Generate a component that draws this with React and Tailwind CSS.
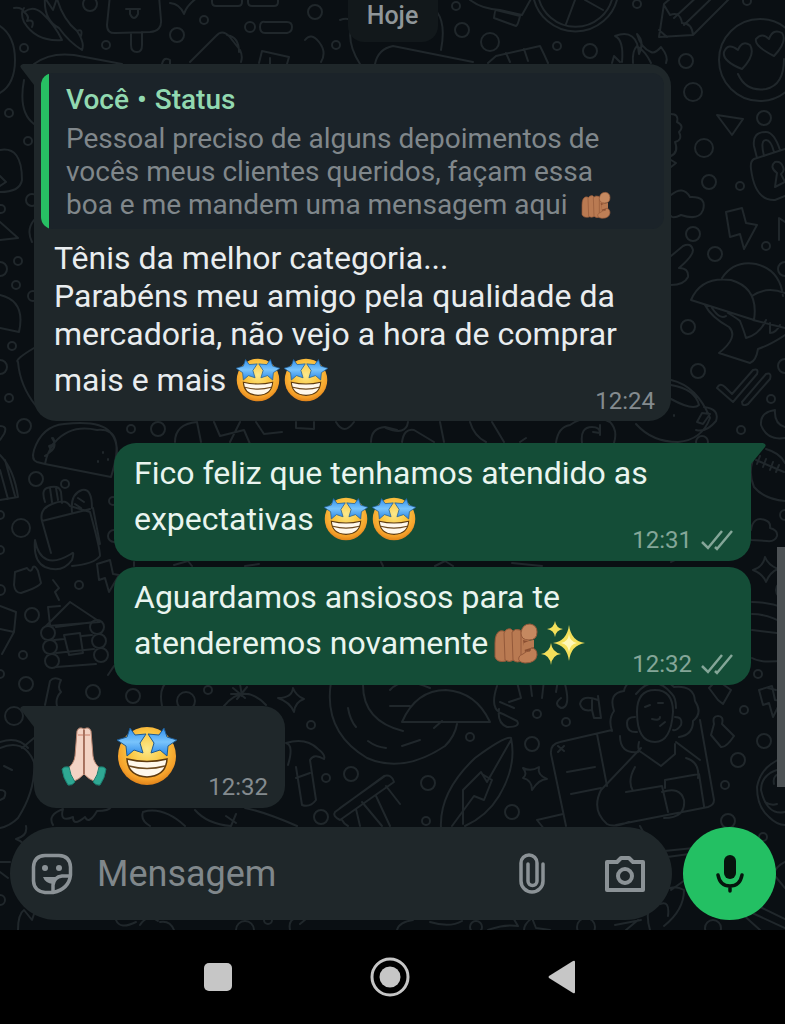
import { useState } from "react";

// [x, y, radius] of the small rings scattered on the wallpaper
const dots = [
  [24, 48, 4], [90, 4, 7], [106, 45, 4], [177, 35, 7], [204, 20, 4], [250, 27, 5], [315, 12, 7],
  [336, 45, 4], [9, 113, 4], [28, 141, 4], [32, 200, 6], [1, 209, 4], [456, 6, 4], [462, 30, 7],
  [490, 42, 9], [557, 46, 4], [590, 51, 7], [637, 4, 4], [686, 61, 7], [693, 92, 9], [764, 118, 7],
  [704, 148, 9], [709, 182, 7], [740, 186, 4], [693, 234, 7], [747, 1, 4], [715, 254, 7], [766, 246, 4],
  [785, 269, 7], [688, 327, 7], [698, 371, 7], [785, 366, 7], [771, 399, 4], [741, 430, 4], [702, 442, 6],
  [18, 261, 4], [0, 269, 7], [16, 285, 4], [33, 296, 5], [12, 346, 4], [0, 367, 7], [9, 398, 4],
  [24, 426, 7], [131, 429, 4], [158, 429, 7], [36, 479, 7], [65, 484, 4], [0, 515, 4], [21, 528, 9],
  [0, 550, 4], [79, 585, 4], [0, 590, 5], [32, 615, 7], [23, 655, 4], [0, 674, 4], [26, 684, 7],
  [93, 692, 7], [133, 696, 7], [208, 690, 4], [186, 701, 9], [14, 716, 9], [311, 725, 4], [351, 774, 7],
  [326, 778, 4], [321, 817, 7], [537, 714, 4], [566, 722, 4], [532, 744, 7], [470, 737, 4], [428, 783, 7],
  [512, 812, 7], [426, 821, 4], [744, 710, 4], [764, 741, 7], [738, 760, 7], [725, 785, 4], [728, 821, 7],
  [763, 837, 4], [758, 674, 4], [785, 515, 5], [785, 590, 9], [0, 900, 5], [268, 920, 4], [586, 927, 9],
  [245, 930, 9], [476, 927, 6], [713, 928, 8], [113, 501, 4], [114, 536, 6],
];

const doodles = [
  // peppers
  "M14 8q8-1 10 4q9-7 18 1q13 12 20 27q-26 2-38-18q-4-9 0-14M24 12q6 4 3 9q8-2 5 6M45-4q-2 24 14 32q10 14 23 22q3-7-5-19q6-3 4 5M56-5q6 24 21 36M45-2l8 12l4-12",
  // ice pop
  "M110-5l-3 30q0 9 9 8l34-1q12-1 11-12l-2-24M131 33v12q0 7 6 7q5 0 5-7V32M126 9h14M130 9v5q4 8 8 0V9",
  "M170 3q10 1 14 11q3-10 16-18M212-6v8q0 4 4 4h22q4 0 4-4v-8M248-6v8q0 4 4 4h22q4 0 4-4v-8M265 22h22q5 0 5 5t-5 6h-22q-5 0-5-6t5-5z",
  "M190 62l26-26q6-7 13 0l11 14q3 6 1 12M227 35q12 2 12 17M259 63l3-12l27 6l-2 7M270 58v6",
  "M162 64q2-8 8-4v4M305 40q6-8 14 2t2 20M340 20q10-4 12 4q-6 18 8 40M375 64q3-15 18-18l80 16M437 12q9 12 4 38",
  "M0 26q15 10 15 34T0 93M34 64q16-12 40-9l48 9M24 80q-6 32 10 44M0 150q22-4 22 30q-2 12-22 12M0 176l6 6l-6 4M0 222l18 16l-18 2M34 220q-8 10-2 22",
  // bell and clock
  "M470 0q12 9 30 10l22 5l10-18M496 10l24 6q-2 9-4 10l-22-8q1-8 2-8zM488 63l8-7l44-10q4 8 8 17M506 53l4 9M524 49l4 12",
  "M533-5a43 43 0 0 0 85 0M538-5a38 38 0 0 0 75 0M575 0l-9 24M585 0l18 10",
  // pencil
  "M659 37l5-33l14-12M659 37l34-2l36-36M664 5l6 10q10-4 12 8q10 0 11 12M674 18l26-24M684 25l30-29M659 30l8 7",
  // flame
  "M615 36q22-8 24 18q6-12-2-20q4 14 14 18q4 2 10-5q8 10 5 16M615 36q9 4 7 26M633 63q-1-12 4-17q9 6 14 17M612 63l2-7l6 6",
  // face with heart eyes
  "M801 60a41 41 0 1 1-82 0a41 41 0 1 1 82 0M742 69q-20-8-18-17q4-10 14-2q4-10 12-5q6 10-8 24M774 56q-20-10-18-17q6-7 13 0q4-11 13-6q6 8-8 23M738 74q8 18 28 15q18-4 18-30",
  "M717 115l26 4l-11 16zM671 114q8 0 6 8q8 4 2 10q4 8-4 10q4 10-4 14M671 160l5 3l-5 4",
  // padlock
  "M757 158l-3-12q-2-14 12-14q8 0 14 18M764 156q-4-16 2-16q5 0 8 12M785 149l-31 10q-4 2-3 10q4 32 24 31l10-4M775 187l2-14q-8-6-2-11q6-1 8 5q2 4-2 7l4 8z",
  "M671 216q2 3 10-1q18 6 22-5q4-14-13-13q-7-12-19-2M726 212l16-4l4 15l11 2l-13 24l-4-15l-10 3zM785 222l-6-4v22",
  // mushrooms
  "M691 300q10-24 40-20q28 8 23 40zM722 278q12-18 34-14q24 6 27 32M752 296q14-10 33-3M753 320l32 8M705 305q6 12 24 22q10 10-10 26l31 10q6-2 8-14q12-4 27-14M712 308q8 12 14 8M728 313q10 6 12 8q4 10 6 17q14-4 20-18M770 323v10q6 0 10-8M671 256l12-10q8-4 10 4q0 6-14 18q10 0 9 9q-4 8-17 8",
  // double tick
  "M717 388q3-6 8-1l7 7l21-24q6-2 4 4l-24 28l-16-14M742 402l24-28q6-2 4 5l-22 25q-6 3-6-2",
  // mug
  "M671 380q26 6 39 38q-8 22-32 24q-26 0-42-18M671 385q24 4 28 20q-6 6-28-6M704 407q16 2 12 14q-10 12-20 9M702 413l8 1l-7 10l-6-2zM674 415v1M775 410q-15 2-14 15q6 16 24 13M775 410q-1 14 10 17",
  "M556 443q2-16 14-18q20-14 40-3q8 8 4 21M582 443q-2-16 10-16q8 0 8 6l-7-1M600 425v10M470 422q4 14 16 20M492 422l12 20M440 422l4 20M386 428q20 8 22-6M402 442q2-14 12-12l20 12",
  // taco
  "M45 464l66 13q16-50-14-47q-26-6-42 12q-8 10-10 22zM45 464l-8-2q-6-2-3-12q8-24 30-26q36-4 46 8q8 8 7 24M45 456q8-4 4-10q8-2 4-8M50 452q8-6 2-14M98 461v1M103 452v1M108 459v1",
  "M0 295q26 6 19 37L0 328M34 348q-20 12-16 14q2 24 18 44M0 455q14 14 18 42L0 500M0 470l8 29M5 460l10 36M0 426q8 0 4 8L0 440",
  "M175 442q0-18 22-20M197 422l4 20M214 422l6 14l24-6l6 14M230 442l10-20M256 422l8 12l18-2M296 422v6l18 1v-7M336 422q8 14 18 0M371 442q0-14 14-15l12 3",
  // bottle, bread and banana
  "M42 521l9 32M42 521q-3-12 10-17q14-6 18 2l20 6q10 36 10 44q-6 8-28 10M42 521l48-12M45 502q-4-12 2-14q12-4 14 4l1 11M50 488l2 14M56 488l2 12M72 512q-2-18 10-22q10-2 10 18M78 498l6 4M75 504l6 4M35 540q6 32 36 14q4-4 1 6q-10 14-27 7q-12-6-10-27zM93 508l7 36",
  "M15 572l12-4q4 6 6-1q2-2 5 4l3 12q-2 4-20 10q-6 0-7-8zM97 564l13-4l3 14l6 1l-10 17l-4-14l-6 2zM53 580l6 8l-4 4l4 8",
  // log cabin
  "M70 602l30 20l-52 4M70 602l-24 24M50 625l-2-18l12-1M64 635l16-2l3 20l-14 2zM56 627l38-5M54 640l10-1M82 636l10-1M56 653l38-4M56 667l40-3",
  "M55 633a7 7 0 1 1-14 0a7 7 0 1 1 14 0M57 647a7 7 0 1 1-14 0a7 7 0 1 1 14 0M59 661a7 7 0 1 1-14 0a7 7 0 1 1 14 0M104 627a7 7 0 1 1-14 0a7 7 0 1 1 14 0M106 641a7 7 0 1 1-14 0a7 7 0 1 1 14 0M108 655a7 7 0 1 1-14 0a7 7 0 1 1 14 0",
  "M0 606l16 6l-2 20l-14-3M14 632l-12 22M108 675l6-9M45 705l5-24q4-5 11-1q-4 8 0 12q-6 6-4 14",
  "M134 562v4M174 565l14-4l4 5M245 566l14-2M381 562l2 4M435 566l10-5l8 5M512 563l30 3M671 562q10-6 34-8M520 442l6-4",
  // sleeping figure at the left edge
  "M0 748q24-10 34 14q2 28-16 56q-8 8-18 10M0 742q18-6 28 6M4 766l8 4M0 790q8 0 4 8l-4 2M22 748l12-10",
  "M162 706q-4-20 8-26M224 706q20-24 42-1M240 684l2 12M231 694h18M233 688l12 10M247 687l-10 12M293 688q-1 10-15 10q12 4 16 14q1-10 10-13q-8-3-11-11z",
  // saturn and record
  "M331 682q-8 50 36 76q36 16 78-12q10-10 12-22M363 685q0 36 40 46M348 708q2 12 8 19M368 741q8 6 18 7M402 722h88q-14-30-44-32q-30 0-44 32zM402 746l18-6M434 728l8-7M390 706h20M390 690q12-14 40-2",
  // hammer
  "M288 765q6-20-2-22q20-6 32 6q8 6 6 10q-10-6-14 1l6 40q-6 8-14 5l-6-38M296 778l14-5",
  // drum
  "M335 812l49-36q8-2 10 6l-54 38q-8-4-5-8zM340 808l45-32M342 820q2 4 6 6M356 809l4 17M362 802l20 24M376 796l14 30M386 786l14 18",
  "M53 825q-6-10 10-16q-4 14 10 8q0 10 12 0q4 8 12-6q12 0 14-4M143 812q20-6 42 14M150 826q-10-6-7-14M195 810q12 14 36 16l5-12M226 816l10 7M245 808q20 4 52 18M26 826q2 10-10 13q10 4 9 10q0-8 10-12M0 862h10M0 872l8 6M18 930q0-16 6-20l8 10l4-12",
  // surfboard
  "M441 828q-2-36 34-70q30-22 36-20q6 28-12 58q-12 20-34 30M511 740l-24 42l-6-10l-18 18v34M452 826l22-30l10 4l8-20l-10-6",
  "M523 768q8 4 16-1q-2 8 8 12q-8 0-15 11q0-10-9-12q5-4 0-10z",
  // lobster
  "M497 686q-8 24 6 28l14 7q4 6-10 6q-10-4-8-18M517 682l4 16l-12 4M530 680l2 16M544 680l-2 18M558 680l-2 12M565 684q6 24-4 24q-8-4 0-10M500 702l14 6",
  "M598 700q-16-6-18 4q2 8 12 6l0-10M592 710l2 8h7l-3-22",
  // person with a laptop
  "M612 730l-52 12q-10 2-9 12l15 72M597 734l10 52M567 772l28-5M571 794l30-6M558 746l6 5M564 746l-6 6M612 731q-4-12 2-20q-6-18 10-20q2-12 20-12q18-4 30 8q20-2 21 14q8 12-2 20q0 14-14 16M620 736q0 18 18 16M637 712q0-22 18-22q18 0 18 22q-2 30-18 30q-18 0-18-30M636 694q18-22 36 0q4 4 4 14M635 717q-8 0-8 6q0 10 10 9M675 717q8 0 6 8q-4 6-8 5",
  "M639 742q-2 8 2 10l20 14l14-12v-10M641 748l-40 42q-10 20 6 34q6 4 22-2M676 742l24 18M700 720l14 80q0 5-6 7l-92 18M635 767q-8 14-2 24M686 758q14 4 12 20M626 792l36-6l6 26M662 792q18-6 22 8q2 18-20 18M665 780l34-6l5 32M665 780v8M645 707l5-2M658 703h5M652 719q8 2 8-2M660 726l5-4M640 826l14 26l60-6M660 858l44-6M537 820l26-6M537 820l8 10",
  "M718 700l-9-12l8-8l14 10l-8 14zM714 724q-2-8 4-8t4 8l12 12q-8 12-13 11l-10-12zM759 690l13-4l3 14l6 1l-8 16l-4-14l-6 2zM785 757q-24 8-28 30q0 20 12 30q8 8 16 8M785 768q-24 4-24 22q6 26 24 22M774 784q-2-10 8-10M765 802q6 4 12 2",
  // football, cloud, planet
  "M766 449q14 4 19 14M758 449q-12 20-4 38q10 12 31 14M756 460l28 12M760 456l-3 8M766 459l-3 8M773 462l-3 8M779 465l-3 7M751 540q-6-6 0-10q2-14 14-10q6 2 5 8q8 2 7 8q-2 6-10 5zM765 557q-2 10-12 13q10 4 13 12q4-10 12-13q-10-4-13-12zM752 602q16 0 33 6M752 614q16 0 33 10M752 630q16 2 33 4M752 658q10 6 33 2M776 690l-8-2",
  "M671 890l14-10M650 930q-6-20 4-32q16-16 30-8q0 20-20 36M660 904q10-4 8 12M756 905l29 14M750 912l35 16M740 912l20 18M785 862q-12 6-10 14l10 12M615 925l26-5M626 930l12-10",
  "M116 920q4 10 20 2M140 925q8-12 18-4M160 922q10-2 14 8M300 924l12-10M397 930q2-8 16-10M430 922q20 6 32-1M488 930q16-6 30-4l-6-10M524 930q0-6 8-12l4 10l14 2M290 930q-2-10 6-12",
];

function Wallpaper() {
  return (
    <svg
      className="absolute inset-0 h-full w-full"
      viewBox="0 0 785 930"
      preserveAspectRatio="xMidYMin slice"
      fill="none"
      stroke="#20272b"
      strokeWidth="2"
      strokeLinecap="round"
      strokeLinejoin="round"
      aria-hidden="true"
    >
      {dots.map(([x, y, r]) => (
        <circle key={`${x}-${y}`} cx={x} cy={y} r={r} />
      ))}
      {doodles.map((d, i) => (
        <path key={i} d={d} />
      ))}
    </svg>
  );
}

function StarStruck({ className }) {
  return (
    <svg viewBox="0 0 60 60" className={className} role="img" aria-label="🤩">
      <defs>
        <radialGradient id="face" cx="50%" cy="38%" r="62%">
          <stop offset="0" stopColor="#fbe98c" />
          <stop offset="0.45" stopColor="#fbc945" />
          <stop offset="0.85" stopColor="#f5a02a" />
          <stop offset="1" stopColor="#e0831a" />
        </radialGradient>
        <linearGradient id="eye" x1="0" y1="0" x2="0" y2="1">
          <stop offset="0" stopColor="#2f8fee" />
          <stop offset="0.5" stopColor="#79c4fb" />
          <stop offset="1" stopColor="#2785e6" />
        </linearGradient>
      </defs>
      <circle cx="30" cy="30" r="29" fill="url(#face)" />
      <path d="M10 33q20 5 40 0q-1 17-20 18Q11 50 10 33z" fill="#fff8ec" stroke="#5d3a10" strokeWidth="1.5" />
      <path d="M12 40q18 5 36 0" fill="none" stroke="#6d4a20" strokeWidth="1.5" />
      <g fill="url(#eye)" stroke="#1f5a90" strokeWidth="1" strokeLinejoin="round">
        <path d="M13 2l5 7l11-1l-6 9l3 10l-9-3l-7 6l-1-10l-9-6l10-3z" />
        <path d="M47 2l-5 7l-11-1l6 9l-3 10l9-3l7 6l1-10l9-6l-10-3z" />
      </g>
    </svg>
  );
}

function PointingHand({ className }) {
  return (
    <svg viewBox="0 0 48 48" className={className} role="img" aria-label="🫵🏽">
      <g fill="#b97a52" stroke="#94593a" strokeWidth="1">
        <path d="M3 24q0-10 5-12q5-1 6 3v27q-9 2-11-4z" />
        <path d="M12 14q2-5 7-4q3 2 3 5v26q-5 3-9 0z" />
        <path d="M20 13q3-4 8-2l3 4v26q-6 4-10 0z" />
        <path d="M29 12l8 2v28h-8z" />
      </g>
      <path d="M29 14q1-9 9-9q7 1 7 8q0 8-8 8q-8 0-8-7z" fill="#c58960" stroke="#94593a" strokeWidth="1" />
      <path d="M31 21q6 2 11 0v9l-9 3z" fill="#8a4f32" />
      <path d="M32 24q6-3 10-3v7l-10 3z" fill="#b97a52" />
      <path d="M31 35q3-3 7-3l1-3q6 0 6 7q-1 8-12 8q-8-1-6-6q1-2 4-3z" fill="#bf7f56" stroke="#94593a" strokeWidth="1" />
    </svg>
  );
}

function Sparkles({ className }) {
  return (
    <svg viewBox="0 0 48 48" className={className} role="img" aria-label="✨" fill="#f4e05a">
      <path d="M29 6q2 16 16 18q-14 2-16 18q-2-16-16-18q14-2 16-18z" />
      <path d="M15 2q1 7 8 8q-7 1-8 8q-1-7-8-8q7-1 8-8z" />
      <path d="M11 24q1 9 10 11q-9 1-10 11q-1-10-10-11q9-2 10-11z" />
      <path d="M29 15q1 8 8 9q-7 1-8 9q-1-8-8-9q7-1 8-9z" fill="#fff8b8" />
    </svg>
  );
}

function PrayingHands({ className }) {
  return (
    <svg viewBox="0 0 60 60" className={className} role="img" aria-label="🙏🏻">
      <g stroke="#b98570" strokeWidth="1" fill="#f3d3c4">
        <path d="M30 3q-5-3-7 2l-2 25q-1 8-8 13l5 13q8-3 12-8z" />
        <path d="M30 3q5-3 7 2l2 25q1 8 8 13l-5 13q-8-3-12-8z" />
      </g>
      <path d="M24 9h5M31 9h5" stroke="#d79a86" strokeWidth="1.5" />
      <path d="M30 4v44M30 28v18" stroke="#9c6350" strokeWidth="1.5" />
      <path d="M15 41q-5-1-7 2q1 9 6 16q4 1 7-3q-5-7-6-15z" fill="#2fa893" stroke="#1a7e70" />
      <path d="M45 41q5-1 7 2q-1 9-6 16q-4 1-7-3q5-7 6-15z" fill="#2fa893" stroke="#1a7e70" />
    </svg>
  );
}

function Ticks() {
  return (
    <svg viewBox="0 0 34 22" className="h-[22px] w-[34px]" fill="none" stroke="currentColor" strokeWidth="2.5" role="img" aria-label="Entregue">
      <path d="M2 13l6 6L22 2" />
      <path d="M15 18l2 2L32 2" />
    </svg>
  );
}

function Tail({ right }) {
  return right ? (
    <svg viewBox="0 0 16 22" className="absolute top-0 -right-[15px] h-[22px] w-4 text-[#144d37]" fill="currentColor" aria-hidden="true">
      <path d="M0 0h13q4 1 2 4L1 21H0z" />
    </svg>
  ) : (
    <svg viewBox="0 0 16 22" className="absolute top-0 -left-[14px] h-[22px] w-4 text-[#1f272a]" fill="currentColor" aria-hidden="true">
      <path d="M16 0H3q-4 1-2 4l13 17h2z" />
    </svg>
  );
}

function Sent({ time, tail, children }) {
  return (
    <div
      className={
        "relative flex w-full max-w-[637px] items-end justify-between self-end rounded-[22px] bg-[#144d37] pt-[11px] pr-[17px] pb-[15px] pl-5 text-[#e9f5ef] " +
        (tail ? "rounded-tr-none" : "")
      }
    >
      {tail && <Tail right />}
      <div className="w-0 flex-1 text-[32px] leading-[38px] whitespace-nowrap">{children}</div>
      <div className="-mb-[6px] flex items-center gap-2 text-2xl leading-6 text-[#84a698]">
        <time>{time}</time>
        <Ticks />
      </div>
    </div>
  );
}

export default function App() {
  const [text, setText] = useState("");

  return (
    <div className="flex min-h-screen flex-col bg-black font-['Roboto',sans-serif]">
      <main className="relative flex flex-1 flex-col overflow-hidden bg-[#0a0f13]">
        <Wallpaper />

        {/* MESSAGES */}
        <div className="relative flex flex-1 flex-col px-[34px]">
          <div className="h-[42px] w-[90px] self-center rounded-b-2xl bg-[#12181b] pt-1 text-center text-[25px] leading-6 font-medium text-[#8f9699]">
            Hoje
          </div>

          <div className="relative mt-[22px] flex w-full max-w-[637px] flex-col rounded-[22px] rounded-tl-none bg-[#1f272a] px-[7px] pt-[9px] pb-[14px]">
            <Tail />
            <div className="flex h-[156px] overflow-hidden rounded-xl bg-[#1b2329]">
              <div className="w-2 bg-[#27bf63]" />
              <div className="pt-[9px] pl-[17px]">
                <p className="flex gap-2 text-[28px] leading-[36px] font-medium text-[#92d9b0]">
                  <span>Você</span>
                  <span>•</span>
                  <span>Status</span>
                </p>
                <p className="mt-1 text-[28px] leading-[33px] whitespace-nowrap text-[#80878b]">
                  Pessoal preciso de alguns depoimentos de
                  <br />
                  vocês meus clientes queridos, façam essa
                  <br />
                  <span className="flex items-center gap-3">
                    boa e me mandem uma mensagem aqui
                    <PointingHand className="h-8 w-8" />
                  </span>
                </p>
              </div>
            </div>
            <div className="mt-[10px] flex items-end justify-between pr-[9px] pl-[13px]">
              <p className="text-[32px] leading-[38px] whitespace-nowrap text-[#e9edef]">
                Tênis da melhor categoria...
                <br />
                Parabéns meu amigo pela qualidade da
                <br />
                mercadoria, não vejo a hora de comprar
                <span className="flex h-[54px] items-center">
                  mais e mais
                  <StarStruck className="ml-2 h-11 w-12" />
                  <StarStruck className="h-11 w-12" />
                </span>
              </p>
              <time className="-mb-[6px] -ml-6 text-2xl leading-6 text-[#848b8f]">12:24</time>
            </div>
          </div>

          <div className="mt-[22px] flex flex-col gap-[6px]">
            <Sent time="12:31" tail>
              Fico feliz que tenhamos atendido as
              <span className="flex h-[54px] items-center">
                expectativas
                <StarStruck className="ml-2 h-11 w-12" />
                <StarStruck className="h-11 w-12" />
              </span>
            </Sent>
            <Sent time="12:32">
              Aguardamos ansiosos para te
              <span className="flex h-[54px] items-center">
                atenderemos novamente
                <PointingHand className="ml-1 h-12 w-12" />
                <Sparkles className="h-12 w-12" />
              </span>
            </Sent>
          </div>

          <div className="relative mt-[21px] flex w-[251px] items-end justify-between self-start rounded-[22px] rounded-tl-none bg-[#1f272a] pt-5 pr-[17px] pb-[22px] pl-5">
            <Tail />
            <div className="flex gap-[3px]">
              <PrayingHands className="h-[60px] w-[60px]" />
              <StarStruck className="h-[60px] w-[60px]" />
            </div>
            <time className="-mb-[13px] text-2xl leading-6 text-[#848b8f]">12:32</time>
          </div>
        </div>

        {/* COMPOSER */}
        <form className="relative mt-[19px] flex gap-[11px] pr-[9px] pb-[10px] pl-[10px]" onSubmit={(e) => e.preventDefault()}>
          <div className="flex h-[93px] min-w-0 flex-1 items-center rounded-full bg-[#1f272a] pr-[26px] pl-[21px] text-[#8b9296]">
            <button type="button" aria-label="Figurinhas">
              <svg viewBox="0 0 42 42" className="h-[42px] w-[42px]" fill="none" stroke="currentColor" strokeWidth="3.5" strokeLinejoin="round">
                <path d="M22 39.500H14Q3 38 2.500 28V14Q3 3 14 2.500h14Q39 3 39.500 14v8Q38 36 22 39.500z" />
                <path d="M22 39V32q1-8 9-9h8" />
                <circle cx="14" cy="15" r="3" fill="currentColor" stroke="none" />
                <circle cx="28" cy="15" r="3" fill="currentColor" stroke="none" />
                <path d="M12 24h15q-3 2-5 7q-8-1-10-7z" fill="currentColor" stroke="none" />
              </svg>
            </button>
            <input
              aria-label="Mensagem"
              placeholder="Mensagem"
              value={text}
              onChange={(e) => setText(e.target.value)}
              className="ml-6 min-w-0 flex-1 bg-transparent text-[36px] leading-[44px] text-[#e9edef] outline-none placeholder:text-[#80878b]"
            />
            <button type="button" aria-label="Anexar" className="mr-[58px]">
              <svg viewBox="0 0 28 42" className="h-[42px] w-7" fill="none" stroke="currentColor" strokeWidth="3.5" strokeLinecap="round">
                <path d="M25 11v17a11 11 0 0 1-22 0V10a8 8 0 0 1 16 0v18a4 4 0 0 1-9 0V11" />
              </svg>
            </button>
            <button type="button" aria-label="Câmera">
              <svg viewBox="0 0 42 38" className="h-[38px] w-[42px]" fill="none" stroke="currentColor" strokeWidth="4" strokeLinejoin="round">
                <path d="M3 7h10l4-4h8l4 4h10v28H3z" />
                <circle cx="21" cy="21" r="7" />
              </svg>
            </button>
          </div>
          <button type="button" aria-label="Gravar áudio" className="flex h-[93px] w-[93px] items-center justify-center rounded-full bg-[#23c063] text-[#06140d]">
            <svg viewBox="0 0 28 38" className="h-[38px] w-7" fill="none" stroke="currentColor" strokeWidth="3.5" strokeLinecap="round">
              <rect x="8" y="0" width="12" height="24" rx="6" fill="currentColor" stroke="none" />
              <path d="M2 20q2 11 12 11t12-11M14 31v5" />
            </svg>
          </button>
        </form>

        {/* scroll thumb */}
        <div className="absolute top-[547px] right-0 h-[240px] w-2 bg-[#4c5154]" />
      </main>

      {/* SYSTEM BUTTONS */}
      <nav className="flex h-[94px] items-center justify-center gap-[138px] pr-[6px] text-[#c6c6c6]">
        <button type="button" aria-label="Recentes" className="h-7 w-7 rounded-[5px] bg-current" />
        <button type="button" aria-label="Início">
          <svg viewBox="0 0 40 40" className="h-10 w-10" fill="none" stroke="currentColor" strokeWidth="3">
            <circle cx="20" cy="20" r="18" />
            <circle cx="20" cy="20" r="10.5" fill="currentColor" stroke="none" />
          </svg>
        </button>
        <button type="button" aria-label="Voltar">
          <svg viewBox="0 0 28 34" className="h-[34px] w-7" fill="currentColor">
            <path d="M25 1q2-1 2 1v30q0 2-2 1L1 18q-1-1 0-2z" />
          </svg>
        </button>
      </nav>
    </div>
  );
}
